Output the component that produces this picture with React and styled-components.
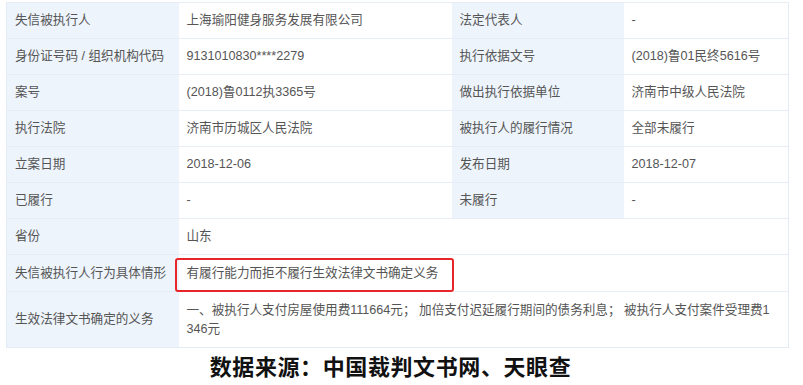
import React from "react";
import styled, { createGlobalStyle } from "styled-components";

const rows = [
  ["失信被执行人", "上海瑜阳健身服务发展有限公司", "法定代表人", "-"],
  ["身份证号码 / 组织机构代码", "9131010830****2279", "执行依据文号", "(2018)鲁01民终5616号"],
  ["案号", "(2018)鲁0112执3365号", "做出执行依据单位", "济南市中级人民法院"],
  ["执行法院", "济南市历城区人民法院", "被执行人的履行情况", "全部未履行"],
  ["立案日期", "2018-12-06", "发布日期", "2018-12-07"],
  ["已履行", "-", "未履行", "-"],
];

const Global = createGlobalStyle`
  body {
    margin: 0;
    background: #fff;
    font-family: "Liberation Sans", "Noto Sans CJK SC", sans-serif;
  }
`;

const Page = styled.div`
  width: 803px;
  padding: 2px 15px 0 6px;
  box-sizing: border-box;
`;

const Table = styled.table`
  width: 782px;
  border-collapse: collapse;
  table-layout: fixed;
  border: 1px solid #e3ebf5;
`;

const Cell = styled.td`
  height: ${(p) => p.$h || 35}px;
  padding: 0 ${(p) => p.$pr || 7}px 0 8px;
  border-top: 1px solid #e6edf6;
  font-size: 12.6px;
  line-height: 19px;
  color: #555;
  background: ${(p) => (p.$label ? "#edf4fc" : "#fff")};
  word-break: break-all;
  vertical-align: middle;
  position: ${(p) => (p.$marked ? "relative" : "static")};
`;

const Highlight = styled.span`
  position: absolute;
  left: -4px;
  top: 3px;
  width: 279px;
  height: 34px;
  border: 2.5px solid #e8262a;
  border-radius: 3px;
  box-sizing: border-box;
  pointer-events: none;
`;

const Caption = styled.div`
  margin-top: 3px;
  text-align: center;
  padding-right: 13px;
  font-family: "Noto Sans CJK SC", serif;
  font-weight: 700;
  font-size: 22px;
  line-height: 28px;
  color: #111;
  letter-spacing: 0.6px;
`;

export default function App() {
  return (
    <Page>
      <Global />
      <Table>
        <colgroup>
          <col style={{ width: 172 }} />
          <col style={{ width: 273 }} />
          <col style={{ width: 172 }} />
          <col style={{ width: 165 }} />
        </colgroup>
        <tbody>
          {rows.map((r) => (
            <tr key={r[0]}>
              <Cell $label>{r[0]}</Cell>
              <Cell>{r[1]}</Cell>
              <Cell $label>{r[2]}</Cell>
              <Cell>{r[3]}</Cell>
            </tr>
          ))}
          <tr>
            <Cell $label>省份</Cell>
            <Cell colSpan={3}>山东</Cell>
          </tr>
          <tr>
            <Cell $label $h={36}>失信被执行人行为具体情形</Cell>
            <Cell colSpan={3} $marked $h={36}>
              <Highlight />
              有履行能力而拒不履行生效法律文书确定义务
            </Cell>
          </tr>
          <tr>
            <Cell $label $h={55}>生效法律文书确定的义务</Cell>
            <Cell colSpan={3} $h={55} $pr={13}>
              一、被执行人支付房屋使用费111664元； 加倍支付迟延履行期间的债务利息； 被执行人支付案件受理费1346元
            </Cell>
          </tr>
        </tbody>
      </Table>
      <Caption>数据来源：中国裁判文书网、天眼查</Caption>
    </Page>
  );
}
